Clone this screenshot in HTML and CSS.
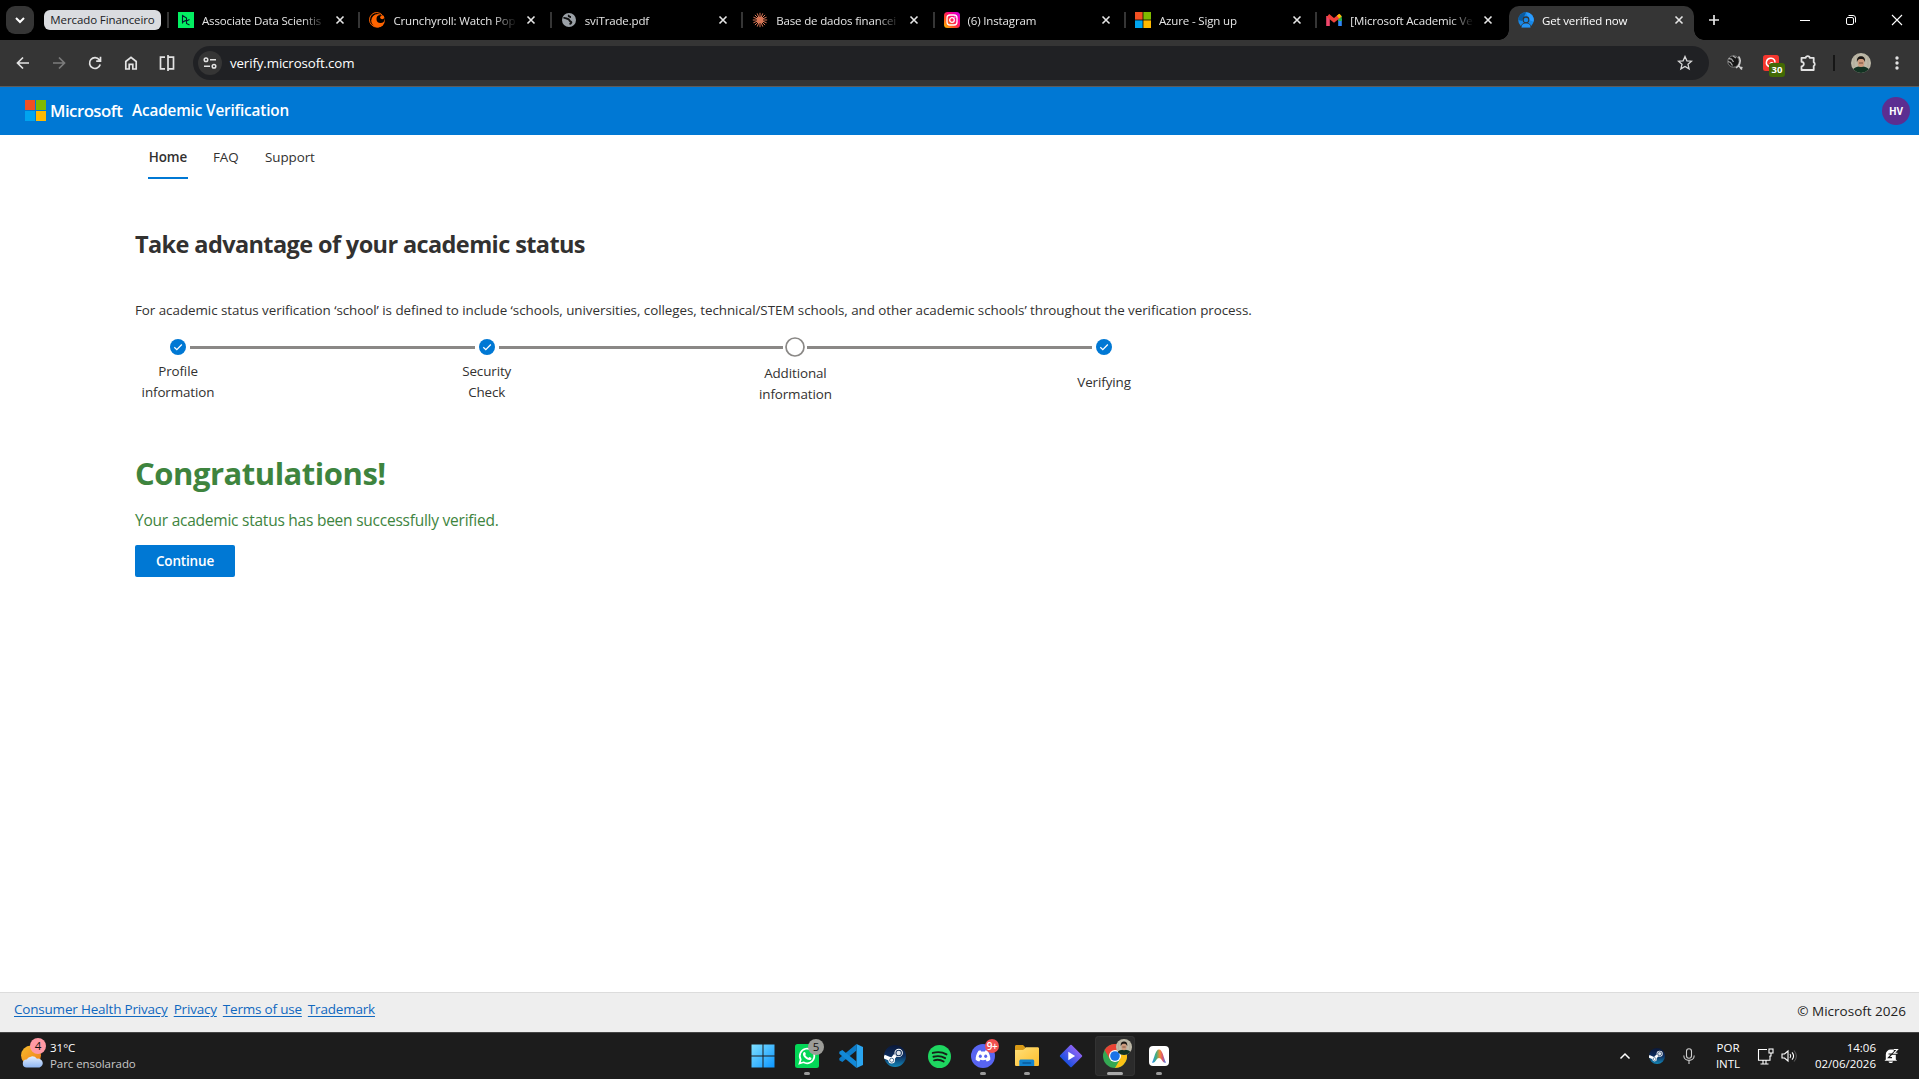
FILE: index.html
```html
<!DOCTYPE html>
<html lang="en">
<head>
<meta charset="utf-8">
<title>Get verified now</title>
<link rel="stylesheet" href="styles.css">
</head>
<body>
<svg class="defs" width="0" height="0">
  <defs>
    <linearGradient id="gIg" x1="0" y1="1" x2="1" y2="0"><stop offset="0" stop-color="#ffc700"/><stop offset=".35" stop-color="#ff4a20"/><stop offset=".65" stop-color="#ff0088"/><stop offset="1" stop-color="#c800f0"/></linearGradient>
    <linearGradient id="gWin" x1="0" y1="0" x2="1" y2="1"><stop offset="0" stop-color="#7fe0ff"/><stop offset="1" stop-color="#0b95ff"/></linearGradient>
    <linearGradient id="gSteam" x1="0" y1="0" x2="0" y2="1"><stop offset="0" stop-color="#0b1838"/><stop offset=".5" stop-color="#0d2d5e"/><stop offset="1" stop-color="#1387b8"/></linearGradient>
    <linearGradient id="gSun" x1="0" y1="0" x2="1" y2="1"><stop offset="0" stop-color="#f5bd2c"/><stop offset="1" stop-color="#f07a1a"/></linearGradient>
    <linearGradient id="gCloud" x1="0" y1="0" x2="0" y2="1"><stop offset="0" stop-color="#e3eefe"/><stop offset="1" stop-color="#8fb6f2"/></linearGradient>
    <linearGradient id="gFold" x1="0" y1="0" x2="1" y2="1"><stop offset="0" stop-color="#ffe07a"/><stop offset="1" stop-color="#ffbd2a"/></linearGradient>
    <linearGradient id="gDia" x1="0" y1="0" x2="0" y2="1"><stop offset="0" stop-color="#8a63f5"/><stop offset="1" stop-color="#1c4fe0"/></linearGradient>
    <linearGradient id="gArc" x1="0" y1="0" x2="1" y2="0"><stop offset="0" stop-color="#2f8cf5"/><stop offset=".3" stop-color="#3eb27a"/><stop offset=".55" stop-color="#f28a35"/><stop offset=".75" stop-color="#d8566c"/><stop offset="1" stop-color="#3a7af5"/></linearGradient>
    <symbol id="x" viewBox="0 0 10 10"><path d="M1.500 1.500l7 7M8.500 1.500l-7 7" stroke="#e6e6e6" stroke-width="1.600"/></symbol>
    <symbol id="ms" viewBox="0 0 21 21"><path fill="#f25022" d="M0 0h10v10H0z"/><path fill="#7fba00" d="M11 0h10v10H11z"/><path fill="#00a4ef" d="M0 11h10v10H0z"/><path fill="#ffb900" d="M11 11h10v10H11z"/></symbol>
    <symbol id="steam" viewBox="0 0 24 24"><circle cx="12" cy="12" r="12" fill="url(#gSteam)"/><path d="M0 12.500l8.500 3.500 4-5" stroke="#fff" stroke-width="4" fill="none"/><circle cx="8.400" cy="16.600" r="3.600" fill="#fff"/><circle cx="8.400" cy="16.600" r="2.200" fill="#fff" stroke="#12416f" stroke-width=".8"/><circle cx="16" cy="8.600" r="4.600" fill="#fff"/><circle cx="16" cy="8.600" r="3" fill="#dfe5ec" stroke="#12305c" stroke-width="1.100"/></symbol>
    <symbol id="face" viewBox="0 0 20 20"><clipPath id="cf"><circle cx="10" cy="10" r="10"/></clipPath><g clip-path="url(#cf)"><path fill="#bdb9a8" d="M0 0h20v20H0z"/><path d="M3 0v14M6 0v9M14 0v9M17 0v14" stroke="#aaa593" stroke-width=".7"/><path fill="#123222" d="M1 20c0-5 4-6.500 9-6.500s9 1.500 9 6.500z"/><ellipse cx="10" cy="9.500" rx="3.300" ry="4.500" fill="#cc9a7c"/><path d="M6 9c-.5-4 1.300-5.800 4-5.800S14.500 5 14 9c-.8-2.500-2-3-4-3s-3.200.5-4 3z" fill="#1c1713"/><path d="M8 10h4" stroke="#5b3a2c" stroke-width=".8"/></g></symbol>
  </defs>
</svg>

<header class="tabstrip">
  <div class="tabsearch"><svg width="12" height="12" viewBox="0 0 12 12"><path d="M2 4l4 4 4-4" fill="none" stroke="#fff" stroke-width="2"/></svg></div>
  <div class="group">Mercado Financeiro</div>
  <div class="tab">
    <svg class="fav" viewBox="0 0 16 16"><path fill="#03ef62" d="M0 0h16v16H0z"/><path d="M4.500 11.500V3.500L8.500 6v2.300L4.500 10M11.500 7.500L8.500 9v2.500l3 1.600M5 10l2.500-1.500" fill="none" stroke="#05192d" stroke-width="1.100"/></svg>
    <span class="label">Associate Data Scientis</span><svg class="close"><use href="#x"/></svg>
  </div>
  <div class="tab">
    <svg class="fav" viewBox="0 0 16 16"><circle cx="7.800" cy="7.800" r="7.300" fill="none" stroke="#ff6400" stroke-width="1" stroke-dasharray="35 12" stroke-dashoffset="-7"/><circle cx="9" cy="8.700" r="6.800" fill="#ff6400"/><circle cx="11.500" cy="7" r="4" fill="#000"/><circle cx="13.200" cy="5.300" r="2" fill="#ff6400"/></svg>
    <span class="label">Crunchyroll: Watch Pop</span><svg class="close"><use href="#x"/></svg>
  </div>
  <div class="tab">
    <svg class="fav" viewBox="0 0 16 16"><circle cx="8" cy="8" r="7" fill="#9aa0a6"/><path d="M2.500 6c2-.5 3 1 4.500 1s1 2 2.500 2.500 1 2-1 2.500M8 3c-1 1.500 1 2 2 2" fill="none" stroke="#111" stroke-width="1.900"/></svg>
    <span class="label">sviTrade.pdf</span><svg class="close"><use href="#x"/></svg>
  </div>
  <div class="tab">
    <svg class="fav" viewBox="0 0 16 16"><path d="M8 .8v14.400M.8 8h14.400M2.900 2.900l10.200 10.200M13.100 2.900L2.900 13.100M5.200 1.400l5.600 13.200M10.800 1.400L5.200 14.600M1.400 5.200l13.200 5.600M14.600 5.200L1.400 10.800" stroke="#d97757" stroke-width="1"/><circle cx="8" cy="8" r="3.200" fill="#d97757"/></svg>
    <span class="label">Base de dados financei</span><svg class="close"><use href="#x"/></svg>
  </div>
  <div class="tab">
    <svg class="fav" viewBox="0 0 16 16"><rect width="16" height="16" rx="3.500" fill="url(#gIg)"/><rect x="3" y="3" width="10" height="10" rx="3" fill="none" stroke="#fff" stroke-width="1.300"/><circle cx="8" cy="8" r="2.300" fill="none" stroke="#fff" stroke-width="1.300"/><circle cx="10.900" cy="5.100" r=".7" fill="#fff"/></svg>
    <span class="label">(6) Instagram</span><svg class="close"><use href="#x"/></svg>
  </div>
  <div class="tab">
    <svg class="fav"><use href="#ms"/></svg>
    <span class="label">Azure - Sign up</span><svg class="close"><use href="#x"/></svg>
  </div>
  <div class="tab">
    <svg class="fav" viewBox="0 0 16 16"><path d="M2 14V4" stroke="#f0476c" stroke-width="3.600"/><path d="M14 14V7" stroke="#2f86f6" stroke-width="3.600"/><path d="M14 9V4" stroke="#2bb24c" stroke-width="3.600"/><path d="M2 3.500l6 5 6-5" fill="none" stroke="#f0423a" stroke-width="3.600"/><path d="M12 5.200l2.600-2.200" stroke="#fbbc04" stroke-width="3.600"/></svg>
    <span class="label">[Microsoft Academic Ve</span><svg class="close"><use href="#x"/></svg>
  </div>
  <div class="tab active">
    <svg class="fav" viewBox="0 0 16 16"><circle cx="8" cy="8" r="7.800" fill="#1787e6"/><path d="M8 .2A7.800 7.800 0 0 0 .2 8l4 1z" fill="#0c5b9e"/><path d="M8 .2a7.800 7.800 0 0 1 7.600 9.500L11 8z" fill="#2b9cff"/><circle cx="8" cy="7.700" r="3.400" fill="#333"/><circle cx="8" cy="8" r="2.300" fill="#1787e6"/><path d="M3 16c0-3.500 2-5 5-5s5 1.500 5 5z" fill="#2494f5" stroke="#333" stroke-width=".8"/></svg>
    <span class="label">Get verified now</span><svg class="close"><use href="#x"/></svg>
  </div>
  <svg class="plus" width="12" height="12" viewBox="0 0 12 12"><path d="M6 1v10M1 6h10" stroke="#e6e6e6" stroke-width="1.700"/></svg>
  <div class="winbtns">
    <svg width="12" height="12" viewBox="0 0 12 12"><path d="M1 6.500h10" stroke="#fff"/></svg>
    <svg width="12" height="12" viewBox="0 0 12 12" fill="none" stroke="#fff"><rect x="1.500" y="3.500" width="7" height="7" rx="1.500"/><path d="M3.500 1.500H8A2.500 2.500 0 0 1 10.500 4v4.500"/></svg>
    <svg width="12" height="12" viewBox="0 0 12 12"><path d="M1 1l10 10M11 1L1 11" stroke="#fff" stroke-width="1.100"/></svg>
  </div>
</header>

<div class="toolbar">
  <div class="navicons">
    <svg viewBox="0 0 16 16"><path d="M14 8H3M8 2.500L2.500 8 8 13.500" stroke="#e3e3e3"/></svg>
    <svg viewBox="0 0 16 16"><path d="M2 8h11M8 2.500L13.500 8 8 13.500" stroke="#7c7c7c"/></svg>
    <svg viewBox="0 0 16 16"><path d="M13.200 9.500A5.400 5.400 0 1 1 12.300 4.800L13.500 6M13.500 1.800V6.200H9.200" stroke="#e3e3e3"/></svg>
    <svg viewBox="0 0 16 16"><path d="M2.800 14V6.500L8 2.300l5.200 4.200V14H9.800V9.300H6.200V14z" stroke="#e3e3e3"/></svg>
    <svg viewBox="0 0 16 16"><path d="M6 2.200H1.500v11.600H6M9 0v16M9 2.200h5.500v11.600H9" stroke="#e3e3e3"/></svg>
  </div>
  <div class="omnibox">
    <div class="site"><svg width="14" height="12" viewBox="0 0 14 12" fill="none" stroke="#e3e3e3" stroke-width="1.500"><circle cx="3" cy="2.800" r="1.800"/><path d="M7 2.800h6M1 9.200h6"/><circle cx="11" cy="9.200" r="1.800"/></svg></div>
    <span class="url">verify.microsoft.com</span>
    <svg class="star" width="16" height="16" viewBox="0 0 16 16"><path d="M8 1.500l1.900 4.300 4.700.4-3.600 3.100 1.100 4.600L8 11.400l-4.100 2.500L5 9.300 1.400 6.200l4.700-.4z" fill="none" stroke="#d8d8d8" stroke-width="1.300"/></svg>
  </div>
  <div class="exts">
    <svg width="16" height="16" viewBox="0 0 16 16"><circle cx="6.500" cy="6.500" r="5.700" fill="#161616" stroke="#808080" stroke-width="1"/><path d="M1.500 3.500l3 .5 2 3M1 6.500l2.500 1 2 3M6 1l3 2" stroke="#aaa" stroke-width="1.300" fill="none"/><path d="M11.500 1.500c2.200 2.500 2.200 6-.2 9.500l-2.300 2M11.500 10.500l3.500 4M15.300 12l-2 2" fill="none" stroke="#ccc" stroke-width="1.600"/></svg>
    <div class="adext"><svg width="16" height="16" viewBox="0 0 16 16"><rect width="16" height="16" rx="2.500" fill="#f5362e"/><path d="M12 7.500A4.300 4.300 0 1 0 6 11.500M10 8a2 2 0 0 0-3 1" fill="none" stroke="#fff" stroke-width="1.500"/></svg><span class="count">30</span></div>
    <svg class="puzzle" width="17" height="17" viewBox="0 0 17 17"><path d="M1.500 2.800h4.200a2 1.700 0 0 1 4 0h4v4.500a1.700 2 0 0 1 0 3.700V15H1.500v-3.600a2 2 0 0 0 0-4.600z" fill="none" stroke="#e3e3e3" stroke-width="1.800" stroke-linejoin="round"/></svg>
    <i class="bar"></i>
    <svg width="20" height="20"><use href="#face"/></svg>
    <svg class="dots" width="4" height="14" viewBox="0 0 4 14" fill="#e3e3e3"><circle cx="2" cy="2" r="1.700"/><circle cx="2" cy="7" r="1.700"/><circle cx="2" cy="12" r="1.700"/></svg>
  </div>
</div>

<div class="brandbar">
  <svg width="21" height="21"><use href="#ms"/></svg>
  <span class="brand">Microsoft</span><span class="product">Academic Verification</span>
  <span class="avatar">HV</span>
</div>

<main class="page">
  <nav class="pivot"><a class="sel">Home</a><a class="faq">FAQ</a><a class="sup">Support</a></nav>
  <h1>Take advantage of your academic status</h1>
  <p class="intro">For academic status verification ‘school’ is defined to include ‘schools, universities, colleges, technical/STEM schools, and other academic schools’ throughout the verification process.</p>
  <div class="steps">
    <div class="step"><svg width="20" height="20" viewBox="0 0 20 20"><circle cx="10" cy="10" r="8" fill="#0078d4"/><path d="M6.300 10.300l2.500 2.400 5-5.200" fill="none" stroke="#fff" stroke-width="1.300"/></svg><span>Profile<br>information</span></div>
    <i class="line"></i>
    <div class="step"><svg width="20" height="20" viewBox="0 0 20 20"><circle cx="10" cy="10" r="8" fill="#0078d4"/><path d="M6.300 10.300l2.500 2.400 5-5.200" fill="none" stroke="#fff" stroke-width="1.300"/></svg><span>Security<br>Check</span></div>
    <i class="line"></i>
    <div class="step current"><svg width="20" height="20" viewBox="0 0 20 20"><circle cx="10" cy="10" r="9" fill="#fff" stroke="#8a8886" stroke-width="1.700"/></svg><span>Additional<br>information</span></div>
    <i class="line"></i>
    <div class="step last"><svg width="20" height="20" viewBox="0 0 20 20"><circle cx="10" cy="10" r="8" fill="#0078d4"/><path d="M6.300 10.300l2.500 2.400 5-5.200" fill="none" stroke="#fff" stroke-width="1.300"/></svg><span>Verifying</span></div>
  </div>
  <h2>Congratulations!</h2>
  <p class="done">Your academic status has been successfully verified.</p>
  <button class="go">Continue</button>
</main>

<footer class="foot">
  <a>Consumer Health Privacy</a><a>Privacy</a><a>Terms of use</a><a>Trademark</a>
  <span class="copy">© Microsoft 2026</span>
</footer>

<div class="taskbar">
  <div class="weather">
    <div class="wicon"><svg width="23" height="23" viewBox="0 0 23 23"><circle cx="10" cy="10.500" r="10" fill="url(#gSun)"/><path d="M6 22.500a4 4 0 0 1-.4-8A6 5.500 0 0 1 16 13.800a4.400 4.400 0 0 1 2.500 8.700z" fill="url(#gCloud)"/></svg><span class="badge pink">4</span></div>
    <div class="wtext"><span class="deg">31°C</span><span class="cond">Parc ensolarado</span></div>
  </div>
  <div class="apps">
    <div class="app"><svg width="24" height="24" viewBox="0 0 24 24"><path fill="url(#gWin)" d="M.5.500h11v11H.5zM12.500.500h11v11h-11zM.5 12.500h11v11H.5zM12.500 12.500h11v11h-11z"/></svg></div>
    <div class="app run"><svg width="24" height="24" viewBox="0 0 24 24"><rect width="24" height="24" rx="2.500" fill="#03d757"/><path d="M4.500 19.500l1.200-4A7.300 7.300 0 1 1 8.500 18.300z" fill="none" stroke="#fff" stroke-width="1.700"/><path d="M8.800 8.300c1-1 1.700.2 2 1.500.2.700-.8 1-.3 1.800a6 6 0 0 0 2.600 2.200c.7.300 1-1 1.600-.8 1.300.5 2.300 1 1.500 2.200-1 1.400-3 1-4.800-.2-1.800-1.200-3-2.600-3.400-4.200-.2-1 .2-1.900.8-2.500z" fill="#fff"/></svg><span class="badge grey">5</span></div>
    <div class="app"><svg width="24" height="24" viewBox="0 0 24 24"><path d="M17.500 0L24 3v18l-6.500 3V0z" fill="#2aa5f0"/><path d="M17.500 0v6.500L3.300 18 .3 16.300v-2z" fill="#0d7cc9"/><path d="M17.500 24v-6.500L3.300 6 .3 7.700v2z" fill="#1289d8"/></svg></div>
    <div class="app"><svg width="22" height="22"><use href="#steam"/></svg></div>
    <div class="app"><svg width="23" height="23" viewBox="0 0 24 24"><circle cx="12" cy="12" r="12" fill="#1ed760"/><path d="M5 8.300c5-1.500 10-1 14.300 1.500M5.700 12.300c4.300-1.200 8.500-.8 12.200 1.400M6.300 16c3.700-1 7-.6 10 1.200" fill="none" stroke="#152018" stroke-width="2" stroke-linecap="round"/></svg></div>
    <div class="app run"><svg width="24" height="24" viewBox="0 0 24 24"><circle cx="12" cy="12" r="12" fill="#5865f2"/><path d="M7.500 6.800l2-.5.700 1.200h3.600l.7-1.200 2 .5c2 3 3 6 2.800 9-1.200 1-2.400 1.500-3.600 1.700l-1-1.700c-1.800.5-3.600.5-5.400 0l-1 1.700c-1.200-.2-2.400-.7-3.600-1.700-.2-3 .8-6 2.800-9z" fill="#fff"/><ellipse cx="9.300" cy="12.300" rx="1.500" ry="1.700" fill="#5865f2"/><ellipse cx="14.700" cy="12.300" rx="1.500" ry="1.700" fill="#5865f2"/></svg><span class="badge red">9+</span></div>
    <div class="app run"><svg width="24" height="24" viewBox="0 0 24 24"><path d="M0 2.500C0 1.500.5 1 1.500 1H8l2.500 2.500L8 7H0z" fill="#d99a16"/><path d="M0 6h8l3-2.800h11.500c1 0 1.500.5 1.500 1.500v15.800c0 1-.5 1.500-1.500 1.500h-21C.5 22 0 21.500 0 20.500z" fill="url(#gFold)"/><path d="M4.300 22v-4.800c0-1 .7-1.700 1.700-1.700h11.500c1 0 1.700.7 1.700 1.700V22z" fill="#1384cf"/><path d="M8 19h7.500" stroke="#0a5a9c" stroke-width="1.500" stroke-linecap="round"/></svg></div>
    <div class="app"><svg width="24" height="24" viewBox="0 0 24 24"><rect x="3.800" y="3.800" width="16.400" height="16.400" rx="1" transform="rotate(45 12 12)" fill="url(#gDia)"/><path d="M9.300 7.800l6.800 4.200-6.800 4.200z" fill="#fff"/></svg></div>
    <div class="app run focus"><svg width="24" height="24" viewBox="0 0 24 24"><circle cx="12" cy="12" r="12" fill="#34a853"/><path d="M12 12L1.600 6A12 12 0 0 1 22.400 6z" fill="#ea4335"/><path d="M12 6h10.400A12 12 0 0 1 12 24l5.200-9z" fill="#fbc116"/><path d="M1.600 6l5.200 9L12 6z" fill="#ea4335"/><circle cx="12" cy="12" r="6" fill="#fff"/><circle cx="12" cy="12" r="4.800" fill="#1a73e8"/></svg><svg class="pic" width="16" height="16"><use href="#face"/></svg></div>
    <div class="app run"><svg width="20" height="20" viewBox="0 0 20 20"><rect width="20" height="20" rx="4" fill="#fff"/><path d="M3 16.500C5.500 12 6.300 3.500 10 3.500s4.500 8.500 7 13c-1.500 1-3.200-.5-4.200-2.500-1.500-2.800-4.100-2.800-5.600 0-1 2-2.700 3.500-4.200 2.500z" fill="url(#gArc)"/></svg></div>
  </div>
  <div class="tray">
    <svg class="chev" width="12" height="8" viewBox="0 0 12 8"><path d="M1.500 6.500L6 2l4.500 4.500" fill="none" stroke="#fff" stroke-width="1.500"/></svg>
    <svg class="tsteam" width="16" height="16"><use href="#steam"/></svg>
    <svg class="mic" width="12" height="16" viewBox="0 0 12 16" fill="none" stroke="#d0d0d0" stroke-width="1.100"><rect x="3.500" y=".7" width="5" height="9.500" rx="2.500"/><path d="M.8 7.500c0 6.500 10.400 6.500 10.400 0M6 12.500V16"/></svg>
    <div class="lang"><span>POR</span><span>INTL</span></div>
    <svg class="net" width="17" height="17" viewBox="0 0 17 17" fill="none" stroke="#fff" stroke-width="1.100"><path d="M10 1.500H1.500v10.800H13V8M6 12.500v3M9 12.500v3M3.500 16h8"/><rect x="12" y="1" width="4" height="4"/><path d="M14 5v3h-1.500"/></svg>
    <svg class="spk" width="17" height="14" viewBox="0 0 17 14" fill="none" stroke="#fff" stroke-width="1.100"><path d="M1 5h2.500L7 2v10L3.500 9H1z"/><path d="M9 5c1 1.300 1 2.700 0 4M11 3.300c2 2.300 2 5.100 0 7.400"/><path d="M13 1.500c3 3.400 3 7.600 0 11" stroke="#555"/></svg>
    <div class="clock"><span>14:06</span><span class="date">02/06/2026</span></div>
    <svg class="bell" width="15" height="16" viewBox="0 0 15 16"><path d="M1.800 11.500V6.500a5 5 0 0 1 5-5h5v10l1.400 1.200H.5zM4.500 13.500h4.500c-.4 2-4.100 2-4.500 0z" fill="#fff"/><path d="M4.500 6h3.500L4.500 9.700h3.500" fill="none" stroke="#1c1c1c" stroke-width="1.200"/><path d="M9.800 1.500h3.700L10 5.300h3.500" fill="none" stroke="#1c1c1c" stroke-width="3"/><path d="M9.800 1.500h3.700L10 5.300h3.500" fill="none" stroke="#fff" stroke-width="1.100"/></svg>
  </div>
</div>
</body>
</html>
```
FILE: styles.css
```css
* { box-sizing: border-box; }
html, body { margin: 0; height: 100%; overflow: hidden; }
body { display: flex; flex-direction: column; background: #fff; font-family: "Open Sans", "Noto Sans", sans-serif; color: #323130; white-space: nowrap; }
svg { display: block; flex: none; }
.defs { position: absolute; }

/* tab strip */
.tabstrip { flex: none; height: 40px; background: #000; display: flex; align-items: center; padding-left: 6px; color: #e6e6e6; font-size: 11.500px; }
.tabsearch { flex: none; width: 28px; height: 28px; border-radius: 9px; background: #353535; display: grid; place-items: center; }
.group { flex: none; width: 117px; height: 20px; margin: 0 6px 0 10px; border-radius: 6px; background: #dadce0; color: #202124; text-align: center; line-height: 20px; letter-spacing: -.1px; }
.tab { flex: none; width: 191.400px; height: 34px; display: flex; align-items: center; padding-left: 10px; position: relative; }
.tab::before { content: ""; flex: none; width: 2px; height: 16px; background: #353535; margin-left: -10px; margin-right: 9px; }
.fav { width: 16px; height: 16px; }
.label { width: 128px; height: 20px; line-height: 20px; margin-left: 8px; padding-top: 1px; letter-spacing: -.15px; -webkit-mask-image: linear-gradient(90deg, #000 100px, transparent 124px); mask-image: linear-gradient(90deg, #000 100px, transparent 124px); }
.close { width: 10px; height: 10px; margin-left: 5px; }
.tab.active { align-self: flex-end; width: 185px; margin-left: 2.200px; padding: 0 0 6px 9px; background: #353535; border-radius: 10px 10px 0 0; color: #fff; }
.tab.active .close { margin-left: 4px; }
.tab.active::before, .tab.active::after { content: ""; position: absolute; bottom: 0; width: 10px; height: 10px; margin: 0; }
.tab.active::before { left: -10px; background: radial-gradient(circle at 0 0, #000 9.500px, #353535 10px); }
.tab.active::after { right: -10px; background: radial-gradient(circle at 100% 0, #000 9.500px, #353535 10px); }
.plus { margin-left: 14px; }
.winbtns { margin-left: auto; display: flex; gap: 34px; padding-right: 16px; }

/* toolbar */
.toolbar { flex: none; height: 47px; background: #353535; border-bottom: 1px solid #5c5c5c; display: flex; align-items: center; padding-left: 15px; }
.navicons { display: flex; gap: 20px; }
.navicons svg { width: 16px; height: 16px; fill: none; stroke-width: 1.700; }
.omnibox { width: 1516px; height: 34px; margin-left: 18px; border-radius: 17px; background: #202124; display: flex; align-items: center; padding: 0 16px 0 5px; }
.site { width: 24px; height: 24px; border-radius: 50%; background: #353535; display: grid; place-items: center; }
.url { margin-left: 8px; color: #fff; font-size: 13.300px; letter-spacing: -.12px; }
.star { margin-left: auto; }
.exts { flex: 1; display: flex; align-items: center; padding-left: 18px; }
.adext { margin-left: 20px; position: relative; }
.count { position: absolute; left: 6px; top: 8px; width: 16px; height: 14px; border-radius: 3px; background: #426a05; color: #fff; font-size: 9.500px; font-weight: 700; line-height: 14px; text-align: center; }
.puzzle { margin-left: 21px; }
.bar { width: 2px; height: 16px; background: #161616; margin: 0 16px 0 16px; }
.dots { margin-left: 24px; }

/* product header */
.brandbar { flex: none; height: 48px; background: #0078d4; color: #fff; display: flex; align-items: center; padding: 0 9px 2px 25px; font-weight: 600; }
.brand { margin-left: 4px; width: 82px; font-size: 16.800px; letter-spacing: -.52px; }
.product { font-size: 15.300px; letter-spacing: -.15px; }
.avatar { margin: 2px 0 0 auto; width: 28px; height: 28px; border-radius: 50%; background: #5c2e91; display: grid; place-items: center; font-size: 10px; font-weight: 700; }

/* page */
.page { flex: 1; min-height: 0; padding-left: 135px; display: flex; flex-direction: column; align-items: flex-start; }
.pivot { display: flex; height: 44px; padding-left: 13px; font-size: 13.400px; line-height: 45px; letter-spacing: -.06px; }
.pivot .sel { width: 40px; border-bottom: 2px solid #0078d4; text-align: center; font-weight: 600; margin-right: 25px; }
.pivot .faq { width: 52px; }
h1 { margin: 48px 0 0; height: 34px; line-height: 34px; font-size: 23.500px; font-weight: 700; letter-spacing: -.61px; }
.intro { margin: 38px 0 0; height: 22px; line-height: 22px; font-size: 13.400px; letter-spacing: -.047px; }
.steps { display: flex; align-items: flex-start; margin: 16px 0 0 33px; height: 80px; }
.step { width: 20px; display: flex; flex-direction: column; align-items: center; font-size: 13.400px; line-height: 21.300px; text-align: center; letter-spacing: -.1px; }
.step span { margin-top: 3.500px; }
.step.current span { margin-top: 5.500px; }
.step.last span { margin-top: 14.500px; }
.line { width: 284.700px; height: 3px; margin: 8.500px 2px 0 2px; background: #8a8886; }
h2 { margin: 34px 0 0; height: 44px; line-height: 44px; font-size: 31px; font-weight: 700; color: #3e843e; letter-spacing: -.48px; }
.done { margin: 13px 0 0; height: 24px; line-height: 24px; font-size: 15.500px; color: #3e843e; letter-spacing: -.24px; }
.go { margin: 13px 0 0; width: 100px; height: 32px; border: 0; border-radius: 2px; background: #0078d4; color: #fff; font: 600 13.500px "Open Sans", sans-serif; padding: 0; letter-spacing: -.15px; }

/* footer */
.foot { flex: none; height: 40px; background: #eee; border-top: 1px solid #dcdcdc; display: flex; padding: 5px 13px 0 14px; font-size: 13.500px; line-height: 22px; }
.foot a { color: #1068bf; text-decoration: underline; text-underline-offset: 2px; margin-right: 6px; letter-spacing: -.2px; }
.copy { margin: 2px 0 0 auto; color: #222; }

/* taskbar */
.taskbar { flex: none; height: 47px; background: #1c1c1c; border-top: 1px solid #444; color: #fff; display: grid; grid-template-columns: 740px 440px 1fr; font-size: 11.500px; line-height: 16px; }
.weather { display: flex; padding: 12px 0 0 21px; }
.wicon { position: relative; }
.badge { position: absolute; width: 16px; height: 16px; border-radius: 50%; color: #111; text-align: center; line-height: 16px; font-size: 11.500px; }
.pink { left: 9px; top: -7px; background: #ff99a4; }
.wtext { display: flex; flex-direction: column; margin: -5px 0 0 6px; }
.cond { color: #c8c8c8; letter-spacing: -.07px; }
.apps { display: flex; padding: 3px 0 0 3px; }
.app { width: 40px; height: 40px; margin-right: 4px; position: relative; display: grid; place-items: center; border-radius: 4px; flex: none; }
.run::after { content: ""; position: absolute; left: 17px; bottom: 1.500px; width: 6px; height: 3px; border-radius: 2px; background: #9a9a9a; }
.focus { background: #2b2b2b; box-shadow: inset 0 0 0 1px #333; }
.focus::after { left: 12px; width: 16px; background: #aaa; }
.grey { left: 21px; top: 3px; background: #9c9c98; }
.red { left: 22px; top: 3px; width: 14px; height: 14px; line-height: 14px; background: #f05050; color: #fff; font-size: 10px; font-weight: 600; letter-spacing: -.5px; }
.pic { position: absolute; left: 21px; top: 3px; }
.tray { display: flex; align-items: center; padding: 0 20px 0 0; justify-content: flex-end; }
.tsteam { margin-left: 18px; }
.mic { margin-left: 18px; }
.lang { display: flex; flex-direction: column; align-items: center; width: 30px; margin-left: 18px; }
.net { margin-left: 14px; }
.spk { margin-left: 7px; }
.clock { display: flex; flex-direction: column; align-items: flex-end; width: 70px; margin-left: 8px; margin-top: -1px; }
.bell { margin-left: 8px; }
```
